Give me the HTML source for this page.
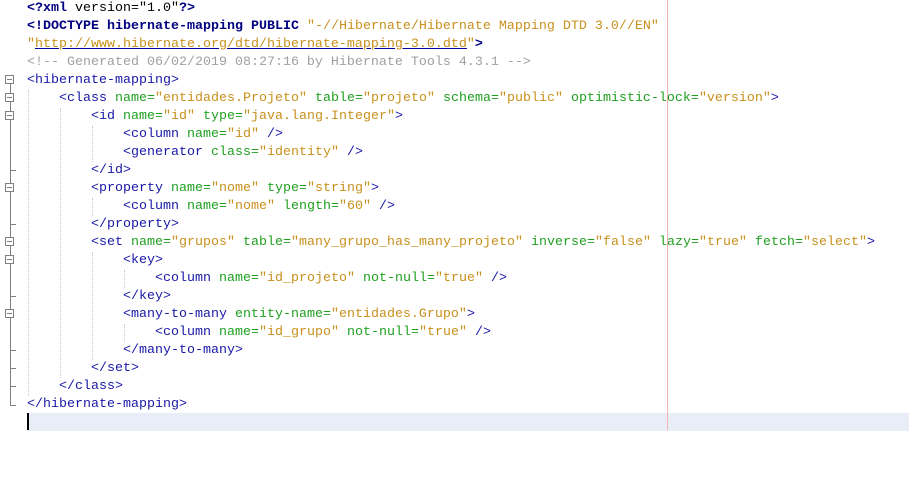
<!DOCTYPE html>
<html><head><style>
html,body{margin:0;padding:0;background:#fff;width:909px;height:488px;overflow:hidden;position:relative}
pre{position:absolute;left:27px;top:0px;margin:0;font-family:"Liberation Mono",monospace;font-size:13.33px;line-height:18px;color:#0000a0;z-index:2}
.t{color:#1818a8}.a{color:#20a020}.v{color:#c8901c}.c{color:#a0a0a0}.b{font-weight:bold;color:#000080}.k{color:#000}
.ul{text-decoration:underline;text-decoration-color:#0000a0}
.hl{position:absolute;left:27px;top:413px;width:882px;height:18px;background:#e8edf8}
.caret{position:absolute;left:27px;top:413px;width:2px;height:17px;background:#000;z-index:3}
.edge{position:absolute;left:667px;top:0;width:1px;height:430px;background:#f2b4b4}
.g{position:absolute;width:0;border-left:1px dotted #c8c8c8}
.vl{position:absolute;left:10px;top:84px;width:1px;height:321px;background:#808080}
.box{position:absolute;left:5px;width:9px;height:9px;border:1px solid #808080;background:#fff;box-sizing:border-box}
.box:after{content:"";position:absolute;left:1px;top:3px;width:5px;height:1px;background:#808080}
.tk{position:absolute;left:10px;width:6px;height:1px;background:#808080}
</style></head><body>
<div class="hl"></div><div class="caret"></div><div class="edge"></div>
<div class="vl"></div>
<div class="box" style="top:75px"></div>
<div class="box" style="top:93px"></div>
<div class="box" style="top:111px"></div>
<div class="box" style="top:183px"></div>
<div class="box" style="top:237px"></div>
<div class="box" style="top:255px"></div>
<div class="box" style="top:309px"></div>
<div class="tk" style="top:170px"></div>
<div class="tk" style="top:224px"></div>
<div class="tk" style="top:296px"></div>
<div class="tk" style="top:350px"></div>
<div class="tk" style="top:368px"></div>
<div class="tk" style="top:386px"></div>
<div class="tk" style="top:405px"></div>
<div class="g" style="left:28px;top:90px;height:306px"></div>
<div class="g" style="left:60px;top:108px;height:270px"></div>
<div class="g" style="left:92px;top:126px;height:36px"></div>
<div class="g" style="left:92px;top:198px;height:18px"></div>
<div class="g" style="left:92px;top:252px;height:108px"></div>
<div class="g" style="left:124px;top:270px;height:18px"></div>
<div class="g" style="left:124px;top:324px;height:18px"></div>
<pre><span class="b">&lt;?xml</span> <span class="k">version=</span><span class="k">"1.0"</span><span class="b">?&gt;</span>
<span class="b">&lt;!DOCTYPE hibernate-mapping PUBLIC</span> <span class="v">"-//Hibernate/Hibernate Mapping DTD 3.0//EN"</span>
<span class="v">"<span class="ul">http://www.hibernate.org/dtd/hibernate-mapping-3.0.dtd</span>"</span><span class="b">&gt;</span>
<span class="c">&lt;!-- Generated 06/02/2019 08:27:16 by Hibernate Tools 4.3.1 --&gt;</span>
<span class="t">&lt;hibernate-mapping&gt;</span>
    <span class="t">&lt;class</span> <span class="a">name=</span><span class="v">"entidades.Projeto"</span> <span class="a">table=</span><span class="v">"projeto"</span> <span class="a">schema=</span><span class="v">"public"</span> <span class="a">optimistic-lock=</span><span class="v">"version"</span><span class="t">&gt;</span>
        <span class="t">&lt;id</span> <span class="a">name=</span><span class="v">"id"</span> <span class="a">type=</span><span class="v">"java.lang.Integer"</span><span class="t">&gt;</span>
            <span class="t">&lt;column</span> <span class="a">name=</span><span class="v">"id"</span> <span class="t">/&gt;</span>
            <span class="t">&lt;generator</span> <span class="a">class=</span><span class="v">"identity"</span> <span class="t">/&gt;</span>
        <span class="t">&lt;/id&gt;</span>
        <span class="t">&lt;property</span> <span class="a">name=</span><span class="v">"nome"</span> <span class="a">type=</span><span class="v">"string"</span><span class="t">&gt;</span>
            <span class="t">&lt;column</span> <span class="a">name=</span><span class="v">"nome"</span> <span class="a">length=</span><span class="v">"60"</span> <span class="t">/&gt;</span>
        <span class="t">&lt;/property&gt;</span>
        <span class="t">&lt;set</span> <span class="a">name=</span><span class="v">"grupos"</span> <span class="a">table=</span><span class="v">"many_grupo_has_many_projeto"</span> <span class="a">inverse=</span><span class="v">"false"</span> <span class="a">lazy=</span><span class="v">"true"</span> <span class="a">fetch=</span><span class="v">"select"</span><span class="t">&gt;</span>
            <span class="t">&lt;key&gt;</span>
                <span class="t">&lt;column</span> <span class="a">name=</span><span class="v">"id_projeto"</span> <span class="a">not-null=</span><span class="v">"true"</span> <span class="t">/&gt;</span>
            <span class="t">&lt;/key&gt;</span>
            <span class="t">&lt;many-to-many</span> <span class="a">entity-name=</span><span class="v">"entidades.Grupo"</span><span class="t">&gt;</span>
                <span class="t">&lt;column</span> <span class="a">name=</span><span class="v">"id_grupo"</span> <span class="a">not-null=</span><span class="v">"true"</span> <span class="t">/&gt;</span>
            <span class="t">&lt;/many-to-many&gt;</span>
        <span class="t">&lt;/set&gt;</span>
    <span class="t">&lt;/class&gt;</span>
<span class="t">&lt;/hibernate-mapping&gt;</span>
</pre>
</body></html>
